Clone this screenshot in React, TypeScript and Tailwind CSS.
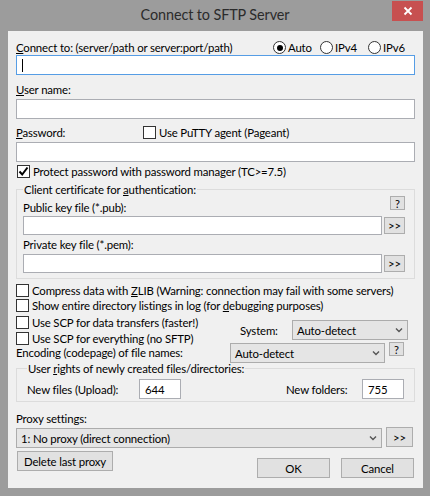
import React from "react";

const F = "[font-family:Lato,'Noto_Sans',sans-serif]";

function Chevron() {
  return (
    <svg width="8" height="6" viewBox="0 0 8 6" className="shrink-0">
      <polyline points="1,1.5 4,4.5 7,1.5" fill="none" stroke="#555" strokeWidth="1.4" />
    </svg>
  );
}

function Check({ checked, children, className = "" }: { checked?: boolean; children: React.ReactNode; className?: string }) {
  return (
    <div className={`flex items-center h-[15px] whitespace-nowrap ${className}`}>
      <span className="w-[13px] h-[13px] border border-[#333] bg-white flex items-center justify-center shrink-0">
        {checked && (
          <svg width="11" height="11" viewBox="0 0 11 11">
            <path d="M1.5 5.5 L4.2 8.5 L9.5 1.5" stroke="#000" strokeWidth="2" fill="none" />
          </svg>
        )}
      </span>
      <span className="ml-[3px]">{children}</span>
    </div>
  );
}

function Radio({ selected, label, className = "" }: { selected?: boolean; label: string; className?: string }) {
  return (
    <div className={`flex items-center h-[15px] ${className}`}>
      <span className="w-[13px] h-[13px] rounded-full border border-[#333] bg-white flex items-center justify-center shrink-0">
        {selected && <span className="w-[6px] h-[6px] rounded-full bg-black" />}
      </span>
      <span className="ml-[2px]">{label}</span>
    </div>
  );
}

function Btn({ children, className = "" }: { children: React.ReactNode; className?: string }) {
  return (
    <div className={`flex items-center justify-center border border-[#adadad] bg-[#e1e1e1] shrink-0 ${className}`}>
      {children}
    </div>
  );
}

function Combo({ value, className = "" }: { value: string; className?: string }) {
  return (
    <div className={`flex items-center justify-between border border-[#acacac] bg-[#e5e5e5] pl-[4px] pr-[4px] shrink-0 ${className}`}>
      <span className="whitespace-nowrap">{value}</span>
      <Chevron />
    </div>
  );
}

function Box({ className = "", children }: { className?: string; children?: React.ReactNode }) {
  return (
    <div className={`flex items-center border border-[#abadb3] bg-white ${className}`}>{children}</div>
  );
}

export default function App() {
  return (
    <div className={`w-[430px] h-[496px] bg-[#9c9c9c] flex flex-col text-[11.4px] tracking-[-0.15px] leading-[15px] text-black ${F}`}>
      {/* title bar */}
      <div className="h-[31px] grid grid-cols-[1fr_auto_1fr] shrink-0">
        <div />
        <div className="text-[14.4px] tracking-[-0.1px] leading-[20px] pt-[5px] text-[#2b2b2b]">Connect to SFTP Server</div>
        <div className="flex justify-end items-start pr-[7px] pt-[1px]">
          <div className="w-[31px] h-[20px] bg-[#c75050] flex items-center justify-center">
            <svg width="10" height="10" viewBox="0 0 10 10">
              <path d="M1.5 1.5 L8.5 8.5 M8.5 1.5 L1.5 8.5" stroke="#fff" strokeWidth="1.8" />
            </svg>
          </div>
        </div>
      </div>

      {/* client */}
      <div className="ml-[8px] w-[415px] h-[457px] bg-[#f0f0f0] flex flex-col px-[8px] shrink-0">
        <div className="mt-[9px] h-[15px] flex items-center">
          <div className="w-[257px] whitespace-nowrap">
            <u>C</u>onnect to: (server/path or server:port/path)
          </div>
          <Radio selected label="Auto" className="w-[47px]" />
          <Radio label="IPv4" className="w-[48px]" />
          <Radio label="IPv6" />
        </div>
        <div className="h-[20px] flex items-center border border-[#569de5] bg-white pl-[5px]">
          <span className="w-[1px] h-[13px] bg-black" />
        </div>

        <div className="mt-[7px] h-[15px]">
          <u>U</u>ser name:
        </div>
        <Box className="mt-[2px] h-[20px]" />

        <div className="mt-[6px] h-[15px] flex items-center">
          <div className="w-[127px]">
            <u>P</u>assword:
          </div>
          <Check>Use PuTTY agent (Pageant)</Check>
        </div>
        <Box className="mt-[2px] h-[20px]" />

        <Check checked className="mt-[2px] ml-[1px]">
          Protect password with password manager (TC&gt;=7.5)
        </Check>

        <fieldset className="mt-[3px] border border-[#dcdcdc] pl-[6px] pr-[9px] pb-[5px]">
          <legend className="px-[1px] h-[15px]">
            Client certificate for <u>a</u>uthentication:
          </legend>
          <div className="-mt-[1px] h-[19px] flex justify-between">
            <div className="self-end">Public key file (*.pub):</div>
            <Btn className="w-[15px] h-[14px] self-start text-[11px]">?</Btn>
          </div>
          <div className="mt-[1px] h-[19px] flex items-center gap-[2px]">
            <Box className="flex-1 h-[19px]" />
            <Btn className="w-[21px] h-[17px]">&gt;&gt;</Btn>
          </div>
          <div className="mt-[2px] h-[15px]">Private key file (*.pem):</div>
          <div className="mt-[2px] h-[19px] flex items-center gap-[2px]">
            <Box className="flex-1 h-[19px]" />
            <Btn className="w-[21px] h-[17px]">&gt;&gt;</Btn>
          </div>
        </fieldset>

        <Check className="mt-[4px]">
          Compress data with <u>Z</u>LIB (Warning: connection may fail with some servers)
        </Check>
        <Check>
          Show entire directory listings in log (for <u>d</u>ebugging purposes)
        </Check>

        <div className="mt-[1px] h-[32px] flex items-center">
          <div className="w-[224px] flex flex-col">
            <div className="h-[16px] flex items-center">
              <Check>Use SCP for data transfers (faster!)</Check>
            </div>
            <div className="h-[16px] flex items-center">
              <Check>Use SCP for everything (no SFTP)</Check>
            </div>
          </div>
          <div className="w-[52px]">System:</div>
          <Combo value="Auto-detect" className="w-[116px] h-[20px]" />
        </div>

        <div className="-mt-[4px] h-[21px] flex">
          <div className="w-[214px] self-center">Encoding (codepage) of file names:</div>
          <Combo value="Auto-detect" className="w-[155px] h-[20px] self-end" />
          <Btn className="ml-[4px] w-[15px] h-[14px] self-start text-[11px]">?</Btn>
        </div>

        <fieldset className="-mt-[2px] border border-[#dcdcdc] pl-[10px] pr-[10px] pb-[2px]">
          <legend className="px-[1px] h-[15px]">
            User <u>r</u>ights of newly created files/directories:
          </legend>
          <div className="mt-[3px] h-[20px] flex items-center">
            <div className="w-[112px]">New files (Upload):</div>
            <Box className="w-[42px] h-[20px] pl-[5px]">644</Box>
            <div className="flex-1" />
            <div className="w-[76px]">New folders:</div>
            <Box className="w-[42px] h-[20px] pl-[5px]">755</Box>
          </div>
        </fieldset>

        <div className="mt-[9px] h-[15px]">Proxy settings:</div>
        <div className="mt-[1px] h-[21px] flex">
          <Combo value="1: No proxy (direct connection)" className="w-[366px] h-[20px] self-end" />
          <Btn className="ml-[4px] w-[27px] h-[20px] self-start">&gt;&gt;</Btn>
        </div>

        <div className="mt-[3px] h-[27px] flex">
          <Btn className="ml-[1px] w-[96px] h-[20px] self-start">Delete last proxy</Btn>
          <Btn className="ml-auto w-[73px] h-[20px] self-end border-[#3c99f0]">OK</Btn>
          <Btn className="ml-[11px] mr-[1px] w-[73px] h-[20px] self-end">Cancel</Btn>
        </div>
      </div>
    </div>
  );
}
